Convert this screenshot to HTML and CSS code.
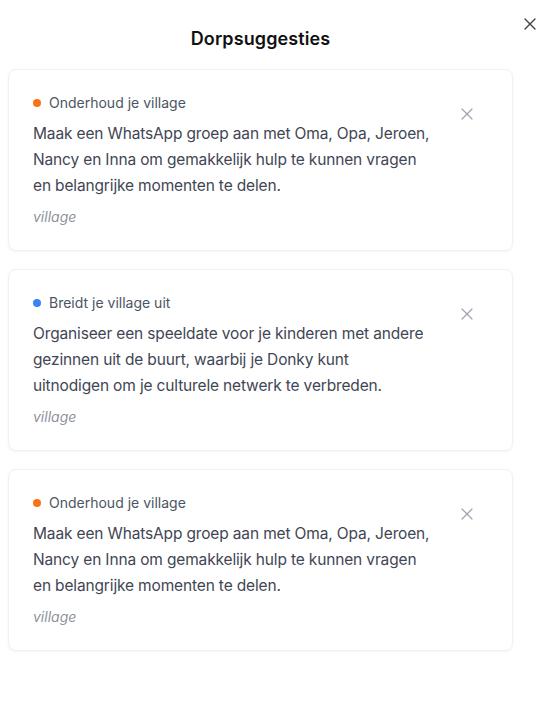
FILE: index.html
```html
<!DOCTYPE html>
<html lang="nl">
<head>
<meta charset="utf-8">
<title>Dorpsuggesties</title>
<link rel="stylesheet" href="styles.css">
</head>
<body>
<div class="dialog">
  <button class="dialog-close" aria-label="Sluiten">
    <svg width="12" height="12" viewBox="0 0 12 12"><path d="M1 1L11 11M11 1L1 11" stroke="currentColor" stroke-width="1.4" stroke-linecap="round"/></svg>
  </button>
  <div class="panel">
    <h1 class="title">Dorpsuggesties</h1>
    <ul class="list">
      <li class="card">
        <div class="card-main">
          <div class="label"><span class="dot dot-orange"></span>Onderhoud je village</div>
          <p class="text">Maak een WhatsApp groep aan met Oma, Opa, Jeroen,<br>Nancy en Inna om gemakkelijk hulp te kunnen vragen<br>en belangrijke momenten te delen.</p>
          <div class="tag">village</div>
        </div>
        <button class="card-close" aria-label="Verwijderen">
          <svg width="12" height="12" viewBox="0 0 12 12"><path d="M1 1L11 11M11 1L1 11" stroke="currentColor" stroke-width="1.2" stroke-linecap="round"/></svg>
        </button>
      </li>
      <li class="card">
        <div class="card-main">
          <div class="label"><span class="dot dot-blue"></span>Breidt je village uit</div>
          <p class="text">Organiseer een speeldate voor je kinderen met andere<br>gezinnen uit de buurt, waarbij je Donky kunt<br>uitnodigen om je culturele netwerk te verbreden.</p>
          <div class="tag">village</div>
        </div>
        <button class="card-close" aria-label="Verwijderen">
          <svg width="12" height="12" viewBox="0 0 12 12"><path d="M1 1L11 11M11 1L1 11" stroke="currentColor" stroke-width="1.2" stroke-linecap="round"/></svg>
        </button>
      </li>
      <li class="card">
        <div class="card-main">
          <div class="label"><span class="dot dot-orange"></span>Onderhoud je village</div>
          <p class="text">Maak een WhatsApp groep aan met Oma, Opa, Jeroen,<br>Nancy en Inna om gemakkelijk hulp te kunnen vragen<br>en belangrijke momenten te delen.</p>
          <div class="tag">village</div>
        </div>
        <button class="card-close" aria-label="Verwijderen">
          <svg width="12" height="12" viewBox="0 0 12 12"><path d="M1 1L11 11M11 1L1 11" stroke="currentColor" stroke-width="1.2" stroke-linecap="round"/></svg>
        </button>
      </li>
    </ul>
  </div>
</div>
</body>
</html>
```

FILE: styles.css
```css
* { box-sizing: border-box; }
html, body { margin: 0; padding: 0; background: #fff; }
body {
  font-family: Inter, "Noto Sans", sans-serif;
  color: #374151;
  width: 551px;
  height: 717px;
  overflow: hidden;
}
.dialog {
  position: relative;
  width: 551px;
  height: 717px;
}
.dialog-close {
  position: absolute;
  top: 18px;
  right: 15px;
  width: 12px;
  height: 12px;
  padding: 0;
  border: 0;
  background: none;
  color: #3f3f46;
  display: flex;
}
.panel {
  width: 521px;
  padding: 0 8px;
}
.title {
  margin: 0;
  padding-top: 25px;
  height: 69px;
  font-size: 18px;
  line-height: 28px;
  font-weight: 600;
  color: #111111;
  text-align: center;
  letter-spacing: 0.1px;
}
.list {
  list-style: none;
  margin: 0;
  padding: 0;
  display: flex;
  flex-direction: column;
  gap: 18px;
}
.card {
  display: flex;
  align-items: flex-start;
  height: 182px;
  padding: 23px 24px 24px 24px;
  border: 1px solid #f1f1f3;
  border-radius: 8px;
  box-shadow: 0 1px 3px rgba(0, 0, 0, 0.05);
  background: #fff;
}
.card-main {
  flex: 1;
}
.label {
  display: flex;
  align-items: center;
  gap: 8px;
  height: 20px;
  font-size: 14px;
  line-height: 20px;
  font-weight: 400;
  color: #4b5563;
}
.dot {
  width: 8px;
  height: 8px;
  border-radius: 50%;
  flex: none;
}
.dot-orange { background: #f97316; }
.dot-blue { background: #3b82f6; }
.text {
  margin: 8px 0 0 0;
  font-size: 15.5px;
  line-height: 26px;
  color: #3f4654;
  letter-spacing: -0.15px;
}
.tag {
  margin-top: 8px;
  font-size: 14px;
  line-height: 20px;
  font-style: italic;
  color: #8e939c;
}
.card-close {
  margin-top: 15px;
  margin-right: 15px;
  width: 12px;
  height: 12px;
  padding: 0;
  border: 0;
  background: none;
  color: #9ca3af;
  display: flex;
}
```
